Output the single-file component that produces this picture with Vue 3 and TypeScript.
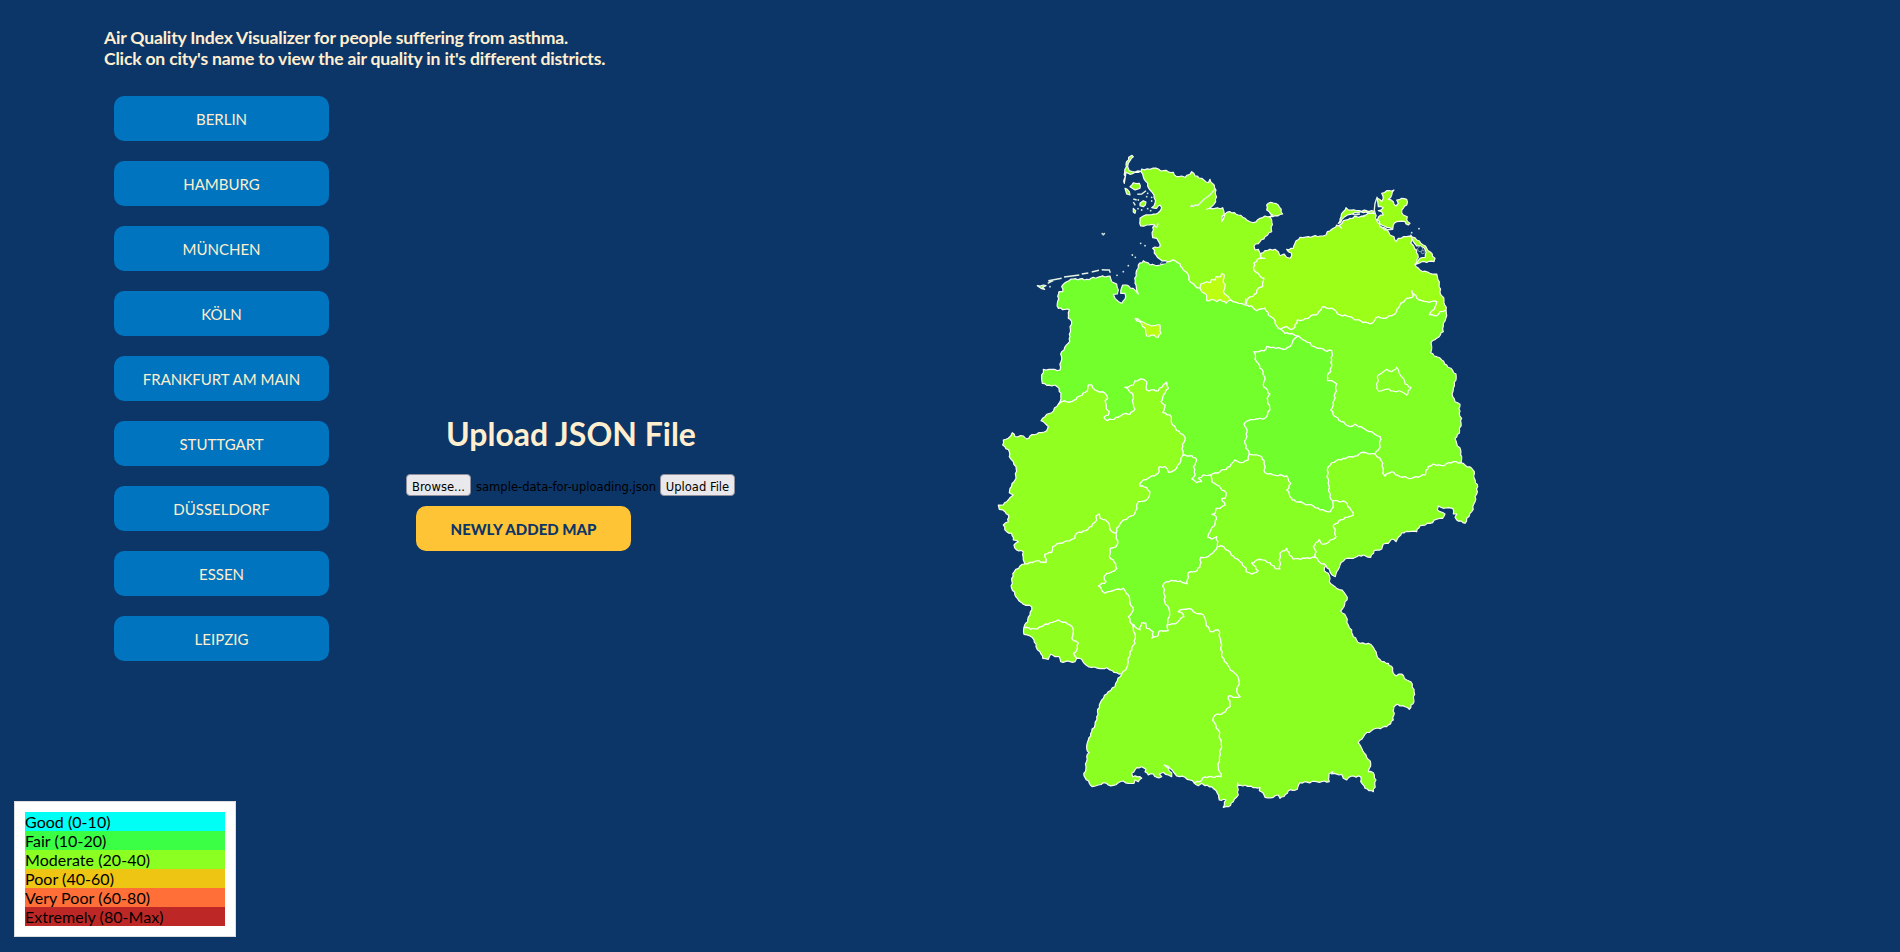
<script setup lang="ts">
type Sheet = 'A' | 'B' | 'C' | 'D' | 'E' | 'F' | 'G' | 'H'
type Point = [number, number]
type Piece = [Sheet, string]

interface Region {
  id: string
  color: string
  arcs: string[]
}

const cities: string[] = [
  'BERLIN',
  'HAMBURG',
  'MÜNCHEN',
  'KÖLN',
  'FRANKFURT AM MAIN',
  'STUTTGART',
  'DÜSSELDORF',
  'ESSEN',
  'LEIPZIG',
]

const legend = [
  { name: 'good', label: 'Good (0-10)' },
  { name: 'fair', label: 'Fair (10-20)' },
  { name: 'moderate', label: 'Moderate (20-40)' },
  { name: 'poor', label: 'Poor (40-60)' },
  { name: 'very-poor', label: 'Very Poor (60-80)' },
  { name: 'extreme', label: 'Extremely (80-Max)' },
]

// The borders are stored per map sheet, in thirds of a map unit from the sheet's origin.
const origins: Record<Sheet, Point> = {
  A: [980, 140],
  B: [1240, 170],
  C: [980, 310],
  D: [1240, 310],
  E: [980, 480],
  F: [1220, 440],
  G: [1060, 620],
  H: [1210, 600],
}

function plot(pieces: Piece[]): Point[] {
  return pieces.flatMap(([sheet, text]) => {
    const [ox, oy] = origins[sheet]
    return text.trim().split(/\s+/).map((pair): Point => {
      const [x, y] = pair.split(',').map(Number)
      return [ox + x / 3, oy + y / 3]
    })
  })
}

// Adds small kinks to long segments, so that borders look surveyed and not ruled.
function roughen(points: Point[]): Point[] {
  const out: Point[] = [points[0]]
  for (let i = 1; i < points.length; i++) {
    const [ax, ay] = points[i - 1]
    const [bx, by] = points[i]
    const length = Math.hypot(bx - ax, by - ay)
    const steps = Math.floor(length / 2.2)
    for (let s = 1; s < steps; s++) {
      const t = s / steps
      const wave = Math.sin((ax + s * 7.3) * 12.9898 + (ay + s * 3.1) * 78.233) * 0.8
      out.push([
        ax + (bx - ax) * t - ((by - ay) / length) * wave,
        ay + (by - ay) * t + ((bx - ax) / length) * wave,
      ])
    }
    out.push(points[i])
  }
  return out
}

// Shared borders: each one is drawn once and used by the states on both sides.
const arcs: Record<string, Piece[]> = {
  shCoast: [
    ['A', '562,365 540,358 528,345 518,325 540,320 536,305 530,295 518,293 518,262 524,255 500,255 482,258 480,235 490,228 515,224 535,218 545,203 540,195 530,205 515,203 525,190 522,165 510,150 498,125 490,110 483,95 485,87 510,88 520,84 550,92 580,97 590,110 605,108 615,112 635,95 645,108 665,115 685,128 690,118 697,130 708,150 707,185 695,200 680,208 705,205 728,203 732,215 725,245 735,222 750,215 775,225 795,235 810,245'],
    ['B', '40,158 60,145 75,138 90,140 95,150 95,185 75,200 60,215 42,228 45,240 55,238 60,250 62,262'],
  ],
  mvCoast: [
    ['B', '62,262 62,250 75,242 105,238 115,245 120,257 132,252 140,262 150,265 155,250 145,245 140,238 160,235 165,220 180,202 205,200 240,198 258,195 262,185 280,175 290,165 305,175 298,166 310,152 330,145 350,140 370,140 385,130 405,130 410,150 420,170 440,178 450,195 462,200 468,215 475,205 500,200 515,200 512,220 530,240 535,262 525,283 540,300 570,310 590,312 598,335 600,365 612,390 618,420'],
  ],
  bbEast: [
    ['B', '618,420 620,437 610,460 610,485 590,505 573,518 575,530 572,548'],
    ['D', '590,140 605,150 620,165 648,192 648,210 640,235 638,260 645,275 660,283 658,310 665,325 658,370 645,385 650,400 662,420 665,440 663,458'],
  ],
  snSouth: [
    ['F', '723,68 735,75 755,85 763,95 763,115 773,140 765,185 755,215 740,235 735,250 710,240 705,232 710,222 700,222 698,205 685,203 670,205 655,198 652,210 660,215 675,222 668,235 650,238 630,250 600,257 590,275 565,275 545,278 535,292 528,305 515,297 505,310 490,312 485,327 462,332 452,352 430,345 410,350 400,355 375,357 360,375 350,395 346,410 336,405 328,388 318,377'],
  ],
  snBy: [['F', '318,377 300,368 285,352']],
  bySouth: [
    ['F', '318,377 313,392 325,400 330,415 328,425 345,440 372,457 382,472 372,500 362,513 378,530 385,555 395,570'],
    ['H', '430,110 450,130 475,130 490,142 500,165 515,185 535,190 548,205 550,220 558,228 575,222 590,240 602,245 612,268 612,305 598,328 585,320 570,318 562,312 552,320 550,360 530,380 490,388 465,403 455,418 445,428 455,445 468,465 482,490 475,515 490,518 498,540 490,575 465,565 452,545 452,530 425,528 410,540 400,535 395,523 365,522 368,515 357,522 358,545 320,545 270,548 262,568 235,572 232,580 210,595 205,585 190,592 165,592 160,580 148,572 150,562 130,563 105,555 85,557 83,548 82,560 85,585 70,605 55,620 40,622 48,600 28,600 22,580 5,560'],
    ['G', '435,497 425,490 415,497 402,488'],
  ],
  bwSouth: [
    ['G', '402,488 390,480 375,472 350,468 342,458 330,445 313,435 335,458 335,470 325,465 310,457 298,462 305,470 290,472 280,462 265,465 255,455 258,448 245,440 230,443 215,460 218,470 240,470 245,475 235,485 225,480 222,490 205,490 190,483 175,488 160,496 145,495 130,488 115,495 97,500 88,490 72,467 78,440 80,410 87,398 80,385 85,360 95,335 105,315 110,290 118,255 125,240 145,215 165,200 172,182 185,162'],
  ],
  rpSouth: [['G', '185,162 170,158 150,150 140,143 120,146 95,142 78,135 65,118 50,115']],
  slSouth: [['E', '290,535 285,545 270,545 242,545 238,530 225,530 212,523 205,538 188,535 180,515 168,500 162,480 150,468 132,463 132,443']],
  rpWest: [['E', '132,443 150,405 155,380 130,373 112,355 95,325 95,295 103,275 120,258 135,252']],
  nrwWest: [
    ['E', '135,252 130,240 130,215 110,210 102,195 115,185 100,180 95,160 80,155 70,135 85,125 85,105 75,95 58,88 55,75 70,75 85,60 100,45 88,38 90,25 102,5'],
    ['C', '108,505 108,470 100,455 88,440 88,425 75,410 68,405 70,390 85,385 92,378 97,368 105,380 130,378 140,387 150,378 170,372 185,368 200,362 205,350 195,340 183,332 195,320 200,313 215,308 235,283'],
  ],
  niCoast: [
    ['C', '235,283 240,275 243,250 232,230 225,225 215,228 187,220 185,203 190,178 215,178 240,180 243,155 245,125 265,100 270,80 270,50 275,35 265,25 268,0'],
    ['A', '235,505 232,490 237,455 248,455 245,440 260,425 280,417 320,418 360,410 390,408 395,425 410,432 415,450 412,462 400,463 405,475 425,490 437,470 435,460 422,460 428,435 440,435 465,450 475,462 470,450 465,430 468,400 475,375 490,362 510,375 540,375 562,365'],
  ],
  niSh: [['A', '562,365 585,362 600,372 610,390 625,405 630,425 645,438 660,445 680,465 720,475 752,480 775,490 794,495']],
  shMv: [['B', '62,262 75,265 60,265 42,278 42,300 60,318 72,325 68,350 55,355 50,370 25,385 14,405']],
  niMv: [['B', '14,405 35,408 50,422 75,415 85,435 105,452 110,468 122,478']],
  mvBb: [['B', '122,478 140,470 150,478 165,472 172,450 190,450 210,440 235,430 245,412 275,415 300,435 330,440 350,450 390,462 405,450 415,440 430,445 455,437 470,425 480,405 500,385 520,380 515,362 530,385 545,392 560,395 590,395 585,410 568,435 590,438 600,425 618,420']],
  niBb: [['B', '122,478 135,490 155,490 175,498']],
  stBb: [['D', '175,78 195,92 210,98 215,108 240,115 255,122 275,122 275,150 272,185 265,190 262,212 275,212 290,222 285,250 280,285 272,300 285,320 305,335 330,350 345,343 375,358 400,370 420,380 420,412 405,433']],
  bbSn: [['D', '405,433 420,445 428,460 428,490 435,498 455,485 480,500 515,505 555,495 565,470 580,462 605,467 640,455 663,458']],
  stSn: [
    ['D', '405,433 385,432 370,427 345,438 310,445 275,458 262,480 265,520 270,560'],
    ['F', '338,183'],
  ],
  niSt: [['D', '175,78 160,90 150,110 130,118 100,112 80,110 72,123 42,125 50,155 70,185 75,210 70,225 90,252 82,265 90,300 75,325 45,328 25,332 12,343 22,365 15,400 28,432']],
  stTh: [
    ['D', '28,432 50,435 65,440 72,460 75,488 100,495 140,498 152,520 140,540 155,565'],
    ['F', '215,180 250,190 280,198 300,210 332,215 340,195 338,183'],
  ],
  thSn: [['F', '338,183 375,185 390,205 400,225 375,232 340,255 348,290 320,310 305,312 298,298 280,320 288,335 285,352']],
  niTh: [
    ['D', '28,432 25,450 0,458'],
    ['C', '765,450 750,470 720,485 692,495'],
  ],
  thHe: [
    ['C', '692,495 695,515 710,525 738,548 735,565'],
    ['E', '725,55 735,75 720,85 708,85 705,100 695,103 708,110 705,130 690,155 683,172 695,178 710,170 712,200'],
  ],
  thBy: [
    ['E', '712,200 725,197 745,212 765,235 780,245 798,265'],
    ['F', '78,395 95,403 115,392 100,375 95,368 120,358 150,368 165,385 180,387 180,340 200,325 208,345 220,358 255,355 285,352'],
  ],
  niHe: [['C', '692,495 670,495 655,505 665,515 650,518 635,507 645,495 640,470 650,450 635,437 608,437']],
  niNrw: [['C', '235,283 245,275 275,275 300,258 322,243 325,225 335,225 345,240 375,250 383,265 375,272 378,295 388,305 385,315 372,322 382,332 415,322 430,312 450,313 465,298 460,280 458,250 435,232 460,225 465,213 490,208 500,215 500,240 535,242 550,225 560,217 565,235 550,255 543,275 555,285 548,308 570,315 578,345 600,370 615,382 608,410 608,437']],
  nrwHe: [
    ['C', '608,437 600,460 585,480 565,487 555,470 538,470 535,490 505,505 485,515 480,528 500,532 510,545 508,560'],
    ['E', '500,60 475,65 465,100 440,118 425,125 410,145 408,160'],
  ],
  nrwRp: [['E', '408,160 395,155 382,125 360,115 358,102 348,108 350,120 335,140 305,158 290,160 285,175 260,183 240,190 218,200 215,218 195,222 198,248 170,243 150,247 135,252']],
  rpHe: [['E', '408,160 413,190 408,200 390,205 388,230 400,240 410,265 395,275 380,280 372,290 378,305 355,318 375,340 400,332 430,325 445,345 450,370 460,390 445,410 455,432']],
  rpBw: [
    ['E', '455,432 465,460 465,490 450,515 445,545 437,570'],
    ['G', '185,162'],
  ],
  heBw: [['E', '455,432 470,445 480,450 485,428 497,430 500,445 520,455 515,475 530,470 540,452 565,452 562,435']],
  heBy: [['E', '562,435 568,410 568,390 555,365 552,325 548,318 560,305 580,303 600,303 622,312 625,278 645,275 660,262 662,232 685,230 700,218 712,200']],
  byBw: [
    ['E', '562,435 585,432 600,418 612,410 608,400 595,395 610,388 635,388 648,400 670,405 678,430 690,455 715,450 722,480'],
    ['G', '485,110 500,130 510,150 530,165 537,185 530,215 540,230 525,232 505,228 510,260 485,282 465,285 458,302 475,330 484,375 478,410 475,440 483,470 455,470 435,470 420,485 402,488'],
  ],
  slRp: [['E', '132,443 165,447 185,440 210,428 235,420 270,435 280,450 275,475 295,490 290,510 280,520 290,535']],
  fehmarn: [['B', '88,140 98,135 88,125 80,120 80,105 92,97 115,105 128,132 105,137 90,140']],
  ruegen: [['B', '412,85 425,95 430,85 425,70 440,62 462,60 455,75 445,88 460,95 468,108 475,100 470,90 485,85 500,88 500,105 485,120 490,135 502,140 500,150 510,160 505,165 495,155 470,155 460,165 458,178 440,172 425,165 412,150 416,140 430,135 425,125 415,122 430,113 415,110']],
  darss: [['B', '295,160 303,140 310,125 318,113 325,120 350,122 380,122 402,124 400,128 370,128 345,127 330,133 312,142 302,158']],
  usedomNorth: [['B', '512,195 530,210 550,225 570,245 585,265 582,275 545,275 525,283 540,265 556,262 556,240 545,230 530,228 520,215']],
  sylt: [['A', '433,130 434,97 438,72 446,52 456,46 460,50 450,62 443,80 448,92 465,96 483,94 465,97 450,103 438,97']],
  foehr: [['A', '450,140 460,128 478,130 480,145 465,150']],
  amrum: [['A', '435,145 442,148 450,165 440,162']],
  pellworm: [['A', '480,190 490,182 498,186 496,195 490,200 480,197']],
  nordstrand: [['A', '460,205 467,212 465,220 460,216']],
  borkum: [['A', '172,437 190,435 198,437 188,442 194,448 185,446']],
  hamburg: [['A', '662,432 680,425 690,428 695,418 705,420 708,410 722,410 725,400 733,405 730,420 735,440 730,455 745,470 752,480 738,490 720,478 710,485 695,478 680,482 680,465 665,455 660,445 662,432']],
  bremen: [['C', '465,25 480,32 490,37 500,42 520,47 540,45 543,70 535,82 515,75 500,78 497,60 485,42 465,25']],
  berlin: [['D', '410,235 415,195 430,185 440,178 455,185 470,172 478,190 490,205 495,222 513,232 500,255 485,245 460,243 440,237 415,243 410,235']],
}

// A leading minus walks an arc backwards.
const regions: Region[] = [
  { id: 'schleswig-holstein', color: '#92ff1f', arcs: ['shCoast', 'shMv', '-niSh'] },
  { id: 'mecklenburg-vorpommern', color: '#9cff18', arcs: ['mvCoast', '-mvBb', '-niMv', '-shMv'] },
  { id: 'niedersachsen', color: '#72ff2c', arcs: ['niCoast', 'niSh', 'niMv', 'niBb', 'niSt', 'niTh', 'niHe', '-niNrw'] },
  { id: 'brandenburg', color: '#82ff25', arcs: ['bbEast', '-bbSn', '-stBb', '-niBb', 'mvBb'] },
  { id: 'sachsen-anhalt', color: '#70ff2c', arcs: ['stBb', 'stSn', '-stTh', '-niSt'] },
  { id: 'sachsen', color: '#8aff22', arcs: ['snSouth', 'snBy', '-thSn', '-stSn', 'bbSn'] },
  { id: 'thueringen', color: '#88ff22', arcs: ['stTh', 'thSn', '-thBy', '-thHe', '-niTh'] },
  { id: 'nordrhein-westfalen', color: '#91ff1f', arcs: ['nrwWest', 'niNrw', 'nrwHe', 'nrwRp'] },
  { id: 'hessen', color: '#78ff29', arcs: ['-nrwHe', '-niHe', 'thHe', '-heBy', '-heBw', '-rpHe'] },
  { id: 'rheinland-pfalz', color: '#90ff1f', arcs: ['rpWest', '-nrwRp', 'rpHe', 'rpBw', 'rpSouth', '-slRp'] },
  { id: 'saarland', color: '#90ff1f', arcs: ['slSouth', 'slRp'] },
  { id: 'bayern', color: '#8bff22', arcs: ['bySouth', '-byBw', 'heBy', 'thBy', '-snBy'] },
  { id: 'baden-wuerttemberg', color: '#8bff22', arcs: ['bwSouth', '-rpBw', 'heBw', 'byBw'] },
  { id: 'fehmarn', color: '#92ff1f', arcs: ['fehmarn'] },
  { id: 'ruegen', color: '#9cff18', arcs: ['ruegen'] },
  { id: 'darss', color: '#9cff18', arcs: ['darss'] },
  { id: 'usedom', color: '#9cff18', arcs: ['usedomNorth'] },
  { id: 'sylt', color: '#92ff1f', arcs: ['sylt'] },
  { id: 'foehr', color: '#92ff1f', arcs: ['foehr'] },
  { id: 'amrum', color: '#92ff1f', arcs: ['amrum'] },
  { id: 'pellworm', color: '#92ff1f', arcs: ['pellworm'] },
  { id: 'nordstrand', color: '#92ff1f', arcs: ['nordstrand'] },
  { id: 'borkum', color: '#72ff2c', arcs: ['borkum'] },
  { id: 'hamburg', color: '#bcff12', arcs: ['hamburg'] },
  { id: 'bremen', color: '#b8ff12', arcs: ['bremen'] },
  { id: 'berlin', color: '#85ff24', arcs: ['berlin'] },
]

const lines: Piece[] = [
  ['A', '632,202 635,195 640,200 645,195 655,196 660,190 672,178 690,165 704,148'],
  ['A', '797,475 796,495'],
  ['A', '203,430 215,424 205,422 245,415'],
  ['A', '252,411 275,408 298,405'],
  ['A', '305,402 325,399'],
  ['A', '335,396 357,391'],
  ['A', '365,389 378,390 388,390 391,398'],
  ['A', '472,163 485,162 498,152'],
  ['A', '460,177 470,180'],
  ['A', '460,186 466,196'],
  ['A', '523,258 530,262 535,250'],
  ['B', '412,80 405,100 403,120 408,140'],
  ['B', '335,130 345,135 360,132'],
  ['B', '365,140 375,135'],
  ['B', '420,168 435,180 458,178'],
]

const islets: Piece[] = [
  ['A', '367,281 373,281 370,284 482,310 495,317 457,345 466,352 445,377 430,395 411,406 503,160 515,183 475,180 474,206 485,210 503,206 500,170 515,172 512,212 210,440'],
  ['B', '537,176 515,188'],
]

// Water enclosed by land, drawn over the state fills.
const lagoons: Piece[] = [
  ['B', '532,236 541,228 548,234 545,246 536,244'],
  ['B', '543,244 552,240 553,250 546,252'],
  ['A', '545,366 560,364 558,371 540,372'],
]

const roughArcs: Record<string, Point[]> = Object.fromEntries(
  Object.entries(arcs).map(([name, pieces]) => [name, roughen(plot(pieces))]),
)

const toPath = (points: Point[]): string =>
  'M' + points.map(([x, y]) => `${x.toFixed(1)} ${y.toFixed(1)}`).join('L')

const shapes = regions.map((region) => ({
  id: region.id,
  color: region.color,
  d: toPath(
    region.arcs.flatMap((name) =>
      name.startsWith('-') ? [...roughArcs[name.slice(1)]].reverse() : roughArcs[name],
    ),
  ) + 'Z',
}))
const linePaths = lines.map((line) => toPath(plot([line])))
const lagoonPaths = lagoons.map((lagoon) => toPath(plot([lagoon])) + 'Z')
const isletPoints = plot(islets)
</script>

<template>
  <main class="page">
    <section class="cities">
      <h1 class="intro">
        Air Quality Index Visualizer for people suffering from asthma.<br />
        Click on city's name to view the air quality in it's different districts.
      </h1>
      <div class="city-list">
        <button v-for="city in cities" :key="city" class="city" type="button">{{ city }}</button>
      </div>
    </section>

    <section class="upload">
      <h2 class="upload-title">Upload JSON File</h2>
      <div class="file-row">
        <button class="native" type="button">Browse...</button>
        <span class="file-name">sample-data-for-uploading.json</span>
        <button class="native send" type="button">Upload File</button>
      </div>
      <button class="new-map" type="button">NEWLY ADDED MAP</button>
    </section>

    <section class="map-area">
      <svg class="map" viewBox="980 140 520 680" width="520" height="680">
        <path v-for="s in shapes" :key="s.id" class="state" :d="s.d" :fill="s.color" />
        <path v-for="d in lagoonPaths" :key="d" class="lagoon" :d="d" />
        <path v-for="d in linePaths" :key="d" class="line" :d="d" />
        <circle v-for="([x, y], i) in isletPoints" :key="i" class="islet" :cx="x" :cy="y" r="0.9" />
      </svg>
    </section>

    <aside class="legend">
      <div v-for="row in legend" :key="row.name" class="legend-row" :class="row.name">
        {{ row.label }}
      </div>
    </aside>
  </main>
</template>

<style>
html,
body {
  margin: 0;
  background: #0c3568;
}
</style>

<style scoped>
.page {
  box-sizing: border-box;
  display: flex;
  height: 952px;
  overflow: hidden;
  background: #0c3568;
  font-family: Lato, 'Liberation Sans', sans-serif;
}

.cities {
  width: 302px;
  padding: 27px 0 0 104px;
}

.intro {
  margin: 0;
  color: #ffefcf;
  font-size: 17.6px;
  font-weight: 700;
  letter-spacing: -0.2px;
  line-height: 21px;
  white-space: nowrap;
}

.city-list {
  display: flex;
  flex-direction: column;
  gap: 20px;
  width: 215px;
  margin: 27px 0 0 10px;
}

.city,
.new-map {
  height: 45px;
  padding: 0;
  border: 0;
  border-radius: 10px;
  font-family: inherit;
  font-size: 15px;
}

.city {
  background: #0074be;
  color: #ffefcf;
}

.upload {
  width: 330px;
  padding-top: 415px;
}

.upload-title {
  margin: 0;
  color: #ffefcf;
  font-size: 32px;
  font-weight: 700;
  line-height: 38px;
  text-align: center;
}

.file-row {
  display: flex;
  align-items: center;
  height: 22px;
  margin-top: 21px;
  font-family: 'DejaVu Sans Condensed', 'DejaVu Sans', sans-serif;
  font-size: 12.85px;
}

.native {
  box-sizing: border-box;
  width: 65px;
  height: 22px;
  padding: 3px 0 0;
  border: 1px solid #8f8f9d;
  border-radius: 4px;
  background: #e9e9ed;
  color: #000;
  font: inherit;
  line-height: 17px;
  white-space: nowrap;
}

.file-name {
  width: 184px;
  padding: 3px 0 0 5px;
  color: #000;
  line-height: 19px;
  white-space: nowrap;
}

.send {
  width: 75px;
}

.new-map {
  width: 215px;
  margin: 10px 0 0 10px;
  background: #ffc435;
  color: #0c3568;
  font-weight: 900;
}

.map-area {
  padding: 140px 0 0 244px;
}

.map {
  display: block;
}

.state {
  stroke: #f8fdf4;
  stroke-width: 1.2;
  stroke-linejoin: round;
}

.line {
  fill: none;
  stroke: #e4f3e4;
  stroke-width: 1.4;
}

.lagoon {
  fill: #0c3568;
  stroke: #e4f3e4;
  stroke-width: 0.5;
}

.islet {
  fill: #d3e8dc;
}

.legend {
  position: fixed;
  left: 14px;
  bottom: 15px;
  box-sizing: border-box;
  width: 222px;
  height: 136px;
  padding: 10px;
  border: 1px solid #ddd;
  background: #fff;
}

.legend-row {
  height: 19px;
  color: #000;
  font-size: 16px;
  letter-spacing: 0.04px;
  line-height: 19px;
}

.good {
  background: #00fff4;
}

.fair {
  background: #3bff45;
}

.moderate {
  background: #8bff22;
}

.poor {
  background: #edc512;
}

.very-poor {
  background: #ff6f37;
}

.extreme {
  background: #bd2826;
}
</style>
